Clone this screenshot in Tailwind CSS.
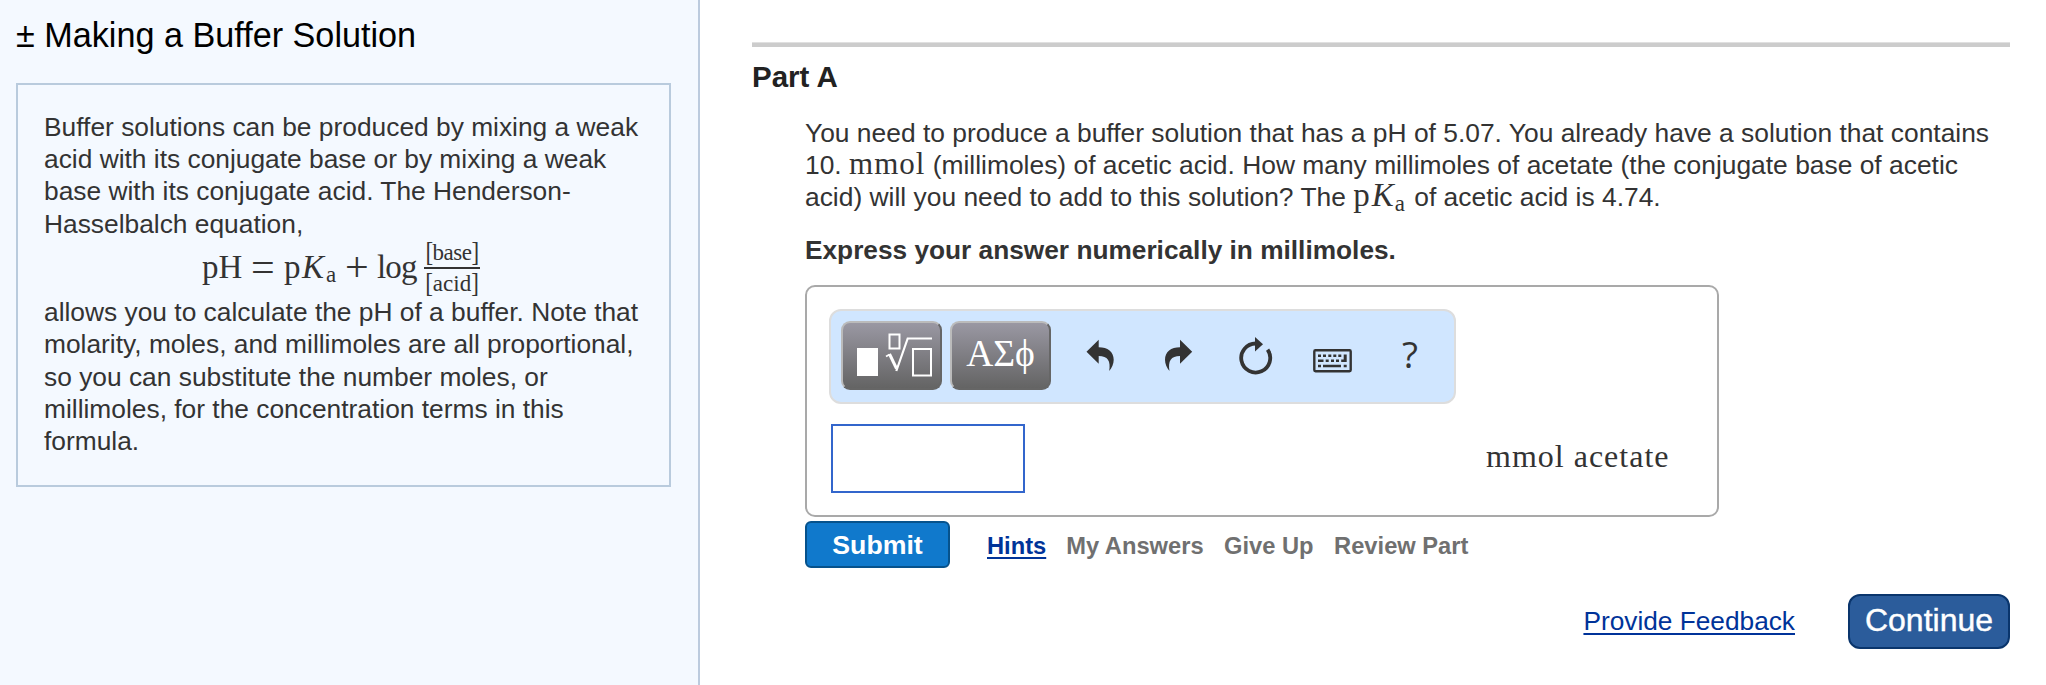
<!DOCTYPE html>
<html lang="en">
<head>
  <meta charset="UTF-8" />
  <meta name="viewport" content="width=device-width, initial-scale=1.0" />
  <title>Making a Buffer Solution</title>
  <script src="https://cdn.jsdelivr.net/npm/@tailwindcss/browser@4"></script>
</head>
<body class="bg-white h-[685px] flex overflow-hidden font-['Liberation_Sans',Arial,sans-serif] text-[26.35px] leading-[32.35px] text-[#333]">

  <!-- Introduction -->
  <aside class="w-[700px] shrink-0 bg-[#f4f9ff] border-r-2 border-[#bccbde] pl-4">
    <h1 class="mt-[15px] h-[40px] leading-[40px] text-[34.2px] text-black whitespace-nowrap">± Making a Buffer Solution</h1>
    <div class="mt-[28px] w-[655px] h-[404px] border-2 border-[#b9cbdd] pt-[25.5px] pl-[26px] whitespace-nowrap">
      <p>Buffer solutions can be produced by mixing a weak<br>acid with its conjugate base or by mixing a weak<br>base with its conjugate acid. The Henderson-<br>Hasselbalch equation,</p>
      <div class="h-[56px] pl-[158px] flex items-start font-['Liberation_Serif',serif] text-[33px] leading-[54px]">
        <span class="w-[49px]">pH</span>
        <span class="w-[33px] text-[42px]">=</span>
        <span class="w-[18px]">p</span>
        <span class="w-[24px] italic">K</span>
        <span class="w-[19px] text-[23px] leading-[70px]">a</span>
        <span class="w-[32px] text-[42px]">+</span>
        <span class="w-[47px] tracking-[-0.8px]">log</span>
        <span class="w-[56px] flex flex-col items-center text-[23px] leading-[26px]">
          <span class="w-full h-[29px] text-center border-b-2 border-[#333] tracking-[-0.5px]"><span class="inline-block scale-y-115">[</span>base<span class="inline-block scale-y-115">]</span></span>
          <span class="pt-[2px]"><span class="inline-block scale-y-115">[</span>acid<span class="inline-block scale-y-115">]</span></span>
        </span>
      </div>
      <p>allows you to calculate the pH of a buffer. Note that<br>molarity, moles, and millimoles are all proportional,<br>so you can substitute the number moles, or<br>millimoles, for the concentration terms in this<br>formula.</p>
    </div>
  </aside>

  <!-- Part A -->
  <main class="grow pl-[52px] pr-[36px] pt-[42px] whitespace-nowrap">
    <div class="h-[5px] bg-[#ccc] border-t border-[#e0e0e0]"></div>
    <h2 class="mt-[12px] h-[36px] leading-[36px] text-[29.5px] font-bold text-[#222]">Part A</h2>

    <div class="pl-[53px] pt-[21.5px]">
      <p class="text-[26.4px]">You need to produce a buffer solution that has a pH of 5.07. You already have a solution that contains<br>10. <span class="font-['Liberation_Serif',serif] text-[31px] leading-[0px] tracking-[1px]">mmol</span> (millimoles) of acetic acid. How many millimoles of acetate (the conjugate base of acetic<br>acid) will you need to add to this solution? The <span class="font-['Liberation_Serif',serif] text-[33px] leading-[0px]"><span class="tracking-[2px]">p</span><i class="tracking-[1px]">K</i><span class="inline-block translate-y-[5px] text-[23px] leading-[0px] mr-[2px]">a</span></span> of acetic acid is 4.74.</p>
      <p class="mt-[20.5px] font-bold text-[26.25px]">Express your answer numerically in millimoles.</p>

      <div class="mt-[19px] w-[914px] h-[232px] border-2 border-[#a9a9a9] rounded-[10px] pt-[22px] pl-[22px]">
        <div class="w-[627px] h-[95px] flex items-start bg-[#d0e6ff] border-2 border-[#ddd] rounded-[12px] pt-[10px] pl-[10px]">
          <button class="w-[101px] h-[69px] rounded-[9px] border-2 border-t-[#bbb] border-l-[#bbb] border-r-[#666] border-b-[#666] bg-linear-to-b from-[#9a98a3] to-[#646464]">
            <svg class="block" width="97" height="65" viewBox="843 323 97 65" fill="none" stroke="#fff">
              <rect x="857" y="348" width="21" height="28" fill="#fff" stroke="none" />
              <rect x="889.500" y="334.500" width="10" height="14" stroke-width="2" />
              <path d="M886 356.500l3.500-2" stroke-width="1.800" />
              <path d="M889.500 354l7 14.500" stroke-width="3" />
              <path d="M896.300 371l11.400-32.500h24.300" stroke-width="2.200" />
              <rect x="913" y="349" width="18" height="26.500" stroke-width="2" />
            </svg>
          </button>
          <button class="ml-2 w-[101px] h-[69px] rounded-[9px] border-2 border-t-[#bbb] border-l-[#bbb] border-r-[#666] border-b-[#666] bg-linear-to-b from-[#9a98a3] to-[#646464] font-['Liberation_Serif',serif] text-[37.5px] leading-[60px] pb-[3px] text-white">ΑΣϕ</button>
          <svg class="block mt-[5px]" width="340" height="60" viewBox="1051 326 340 60" fill="#333">
            <!-- undo -->
            <path d="M1086.500 351.700l12.200-12v7.600c9 0 15 4.500 15 12.500 0 4-1.800 8-4.500 11.200 1.700-10-1.500-15-10.500-15v7.700z" />
            <!-- redo -->
            <path d="M1192.200 351.700l-12.200-12v7.600c-9 0-15 4.500-15 12.500 0 4 1.800 8 4.500 11.200-1.700-10 1.500-15 10.500-15v7.700z" />
            <!-- reset -->
            <path d="M1255.700 343.500a14.500 14.500 0 1 0 11.900 6.200" fill="none" stroke="#333" stroke-width="3.800" />
            <path d="M1255 337l8 7.300-8 7.300z" />
            <!-- keyboard -->
            <rect x="1314.300" y="350.200" width="36.400" height="21" rx="1.200" fill="none" stroke="#333" stroke-width="2.400" />
            <path d="M1318 354.500h3v2.500h-3zM1323 354.500h3v2.500h-3zM1328.300 354.500h3v2.500h-3zM1333.300 354.500h3v2.500h-3zM1338.300 354.500h3v2.500h-3zM1343.700 354.500h3v7.500h-5.500v-2.500h2.500zM1318 359.500h5.500v2.500h-5.500zM1325.700 359.500h3v2.500h-3zM1331 359.500h3v2.500h-3zM1336 359.500h3v2.500h-3zM1318 364.800h3v2.500h-3zM1323 364.800h18v2.500h-18zM1343.700 364.800h3v2.500h-3z" />
          </svg>
          <span class="ml-[11px] w-[20px] h-[60px] leading-[60px] mt-[3px] text-[37px] font-['Open_Sans',sans-serif]">?</span>
        </div>
        <div class="mt-[20px] flex items-start">
          <div class="ml-[2px] w-[194px] h-[69px] border-2 border-[#3366cc] bg-white"></div>
          <span class="ml-[461px] mt-[12px] leading-[40px] font-['Liberation_Serif',serif] text-[32px] tracking-[1px]">mmol acetate</span>
        </div>
      </div>

      <div class="mt-[4px] flex items-center text-[23.7px] font-bold text-[#707070]">
        <button class="w-[145px] h-[47px] bg-[#1079cc] border-2 border-[#06528c] rounded-[6px] text-[26.7px] text-white">Submit</button>
        <a class="ml-[37px] pt-[2px] text-[#039] underline decoration-2 underline-offset-[3px]">Hints</a>
        <span class="ml-[20px] pt-[2px]">My Answers</span>
        <span class="ml-[20.5px] pt-[2px]">Give Up</span>
        <span class="ml-[20.5px] pt-[2px]">Review Part</span>
      </div>
    </div>

    <div class="mt-[26px] flex justify-end items-start text-[26.25px]">
      <a class="mt-[11px] mr-[53px] text-[#039] underline decoration-2 underline-offset-[3px]">Provide Feedback</a>
      <button class="w-[162px] h-[55px] bg-[#2b5c9b] border-2 border-[#0a356c] rounded-[12px] text-[32px] leading-[48px] pb-[3px] text-white [-webkit-text-stroke:0.4px_white]">Continue</button>
    </div>
  </main>
</body>
</html>
